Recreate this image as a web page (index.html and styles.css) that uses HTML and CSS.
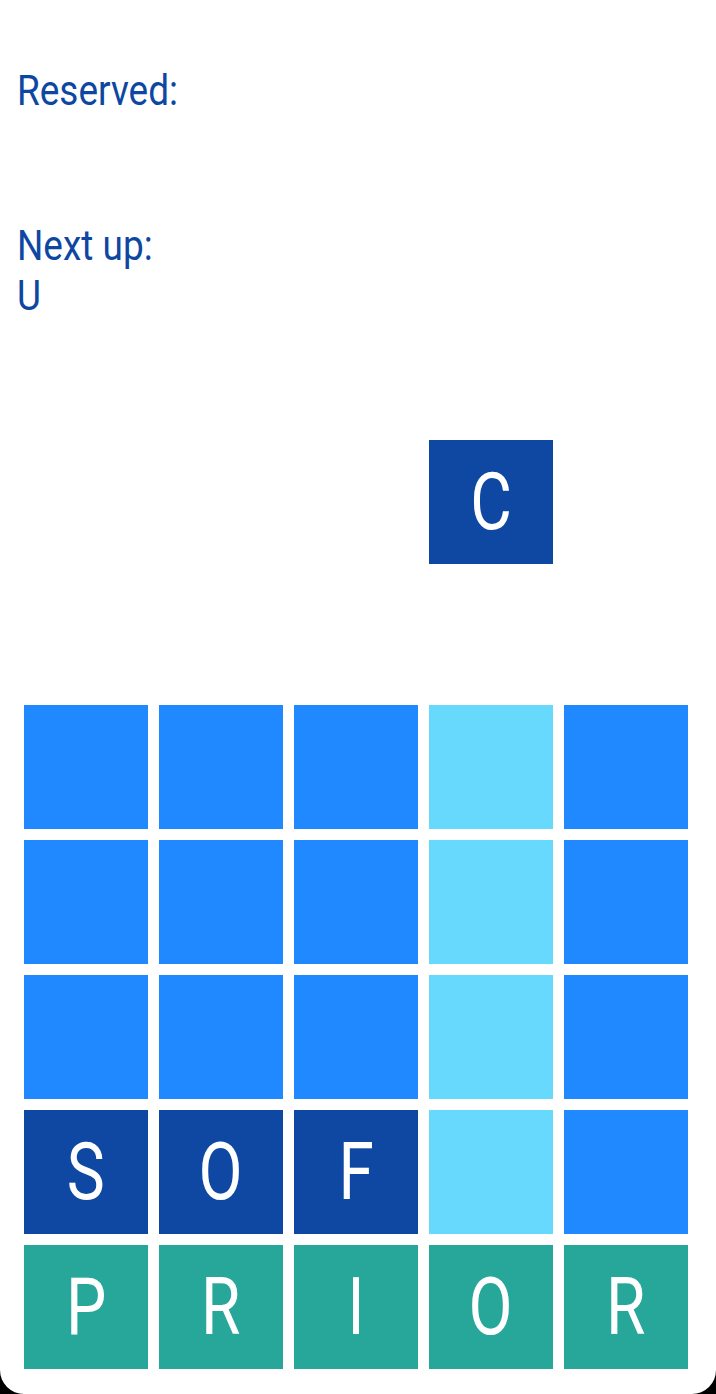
FILE: index.html
```html
<!DOCTYPE html>
<html lang="en">
<head>
    <meta charset="UTF-8">
    <meta name="viewport" content="width=device-width, initial-scale=1.0">
    <title>Word Drop</title>
    <link rel="stylesheet" href="styles.css">
</head>
<body>
    <div class="screen">
        <div class="info">
            <div class="label"><span>Reserved:</span></div>
            <div class="reserved"></div>
            <div class="label"><span>Next up:</span></div>
            <div class="label"><span>U</span></div>
        </div>

        <div class="field">
            <div class="tile dark falling"><span>C</span></div>
        </div>

        <div class="board">
            <div class="tile empty"></div>
            <div class="tile empty"></div>
            <div class="tile empty"></div>
            <div class="tile lane"></div>
            <div class="tile empty"></div>

            <div class="tile empty"></div>
            <div class="tile empty"></div>
            <div class="tile empty"></div>
            <div class="tile lane"></div>
            <div class="tile empty"></div>

            <div class="tile empty"></div>
            <div class="tile empty"></div>
            <div class="tile empty"></div>
            <div class="tile lane"></div>
            <div class="tile empty"></div>

            <div class="tile dark"><span>S</span></div>
            <div class="tile dark"><span>O</span></div>
            <div class="tile dark"><span>F</span></div>
            <div class="tile lane"></div>
            <div class="tile empty"></div>

            <div class="tile word"><span>P</span></div>
            <div class="tile word"><span>R</span></div>
            <div class="tile word"><span>I</span></div>
            <div class="tile word"><span>O</span></div>
            <div class="tile word"><span>R</span></div>
        </div>
    </div>
</body>
</html>
```

FILE: styles.css
```css
body {
    margin: 0;
    background: #000;
    font-family: Roboto, "Liberation Sans", sans-serif;
}
.screen {
    height: 1394px;
    background: #fff;
    border-radius: 0 0 24px 24px;
    box-sizing: border-box;
    padding-top: 66px;
    overflow: hidden;
}
.info {
    padding: 0 17px;
    color: #0d47a1;
}
.label {
    font-size: 42px;
    line-height: 50px;
    height: 50px;
}
.label span {
    display: inline-block;
    transform: scaleX(0.88);
    transform-origin: left center;
}
.reserved {
    height: 105px;
}
.field,
.board {
    display: grid;
    grid-template-columns: repeat(5, 124px);
    gap: 11px;
    padding: 0 24px;
}
.field {
    margin-top: 119px;
    margin-bottom: 141px;
}
.falling {
    grid-column: 4;
}
.tile {
    height: 124px;
    display: flex;
    align-items: center;
    justify-content: center;
    color: #fff;
    font-size: 80px;
}
.tile span {
    display: inline-block;
    transform: scaleX(0.8);
}
.empty {
    background: #2189ff;
}
.lane {
    background: #66d9fc;
}
.dark {
    background: #0e48a2;
}
.word {
    background: #27a69a;
}
```
